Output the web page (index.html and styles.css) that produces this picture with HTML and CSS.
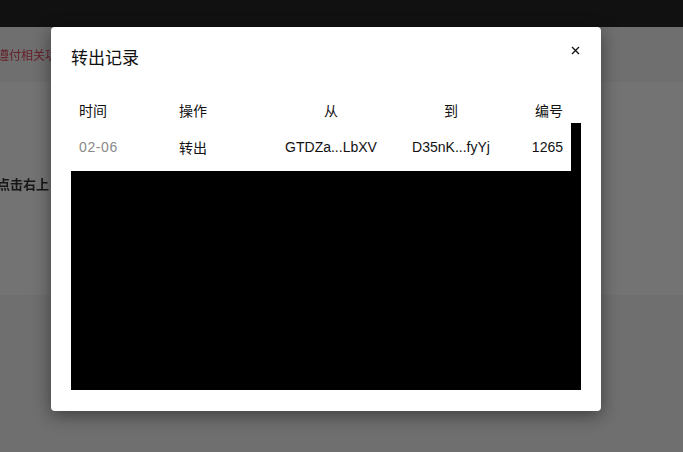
FILE: index.html
```html
<!DOCTYPE html>
<html lang="zh">
<head>
<meta charset="utf-8">
<link rel="stylesheet" href="styles.css">
</head>
<body>
<div class="page">
  <div class="topbar"></div>
  <div class="notice">遵付相关功</div>
  <div class="card">
    <div class="hint">点击右上</div>
  </div>
</div>
<div class="overlay"></div>
<div class="modal">
  <div class="modal-title">转出记录</div>
  <button class="close" aria-label="close">
    <svg width="9" height="9" viewBox="0 0 9 9"><path d="M1 1L8 8M8 1L1 8" stroke="#111" stroke-width="1.3" fill="none"/></svg>
  </button>
  <div class="thead">
    <div class="c c1">时间</div>
    <div class="c c2">操作</div>
    <div class="c c3">从</div>
    <div class="c c4">到</div>
    <div class="c c5">编号</div>
  </div>
  <div class="tbody">
    <div class="row">
      <div class="c c1 muted">02-06</div>
      <div class="c c2">转出</div>
      <div class="c c3">GTDZa...LbXV</div>
      <div class="c c4">D35nK...fyYj</div>
      <div class="c c5">1265</div>
    </div>
  </div>
</div>
</body>
</html>
```
FILE: styles.css
```css
* { box-sizing: border-box; }
html, body { margin: 0; padding: 0; }
body {
  width: 683px;
  height: 452px;
  overflow: hidden;
  background: #f5f5f5;
  font-family: "Liberation Sans", "Noto Sans CJK SC", sans-serif;
  position: relative;
}
.page { display: flex; flex-direction: column; }
.topbar { height: 27px; background: #262626; }
.notice {
  height: 55px;
  display: flex;
  align-items: center;
  margin-left: -3px;
  font-size: 12px;
  color: #e04a5e;
  filter: blur(0.4px);
}
.card {
  height: 213px;
  background: #ffffff;
  padding-top: 92px;
}
.hint {
  margin-left: -3px;
  font-size: 13px;
  font-weight: bold;
  color: #333;
  filter: blur(0.3px);
}
.overlay {
  position: absolute;
  inset: 0;
  background: rgba(0, 0, 0, 0.55);
}
.modal {
  position: absolute;
  left: 51px;
  top: 27px;
  width: 550px;
  height: 384px;
  background: #fff;
  border-radius: 4px;
  box-shadow: 0 4px 18px rgba(0, 0, 0, 0.45);
  padding: 20px 20px 21px 20px;
  display: flex;
  flex-direction: column;
}
.modal-title {
  font-size: 17px;
  line-height: 24px;
  color: #111;
  font-weight: 400;
}
.close {
  position: absolute;
  top: 19px;
  right: 21px;
  border: 0;
  background: none;
  padding: 0;
  width: 9px;
  height: 9px;
  display: flex;
}
.thead {
  margin-top: 26px;
  width: 500px;
  height: 26px;
  display: flex;
  align-items: center;
  font-size: 14px;
  color: #111;
}
.tbody {
  flex: 1;
  width: 510px;
  background: #000;
}
.row {
  width: 500px;
  height: 48px;
  background: #fff;
  display: flex;
  align-items: center;
  font-size: 14px;
  color: #111;
}
.c { padding: 0 8px; white-space: nowrap; }
.c1 { width: 100px; }
.c2 { width: 100px; }
.c3 { width: 120px; text-align: center; }
.c4 { width: 120px; text-align: center; }
.c5 { width: 60px; text-align: right; }
.muted { color: #8a8a8a; letter-spacing: 0.6px; }
```
